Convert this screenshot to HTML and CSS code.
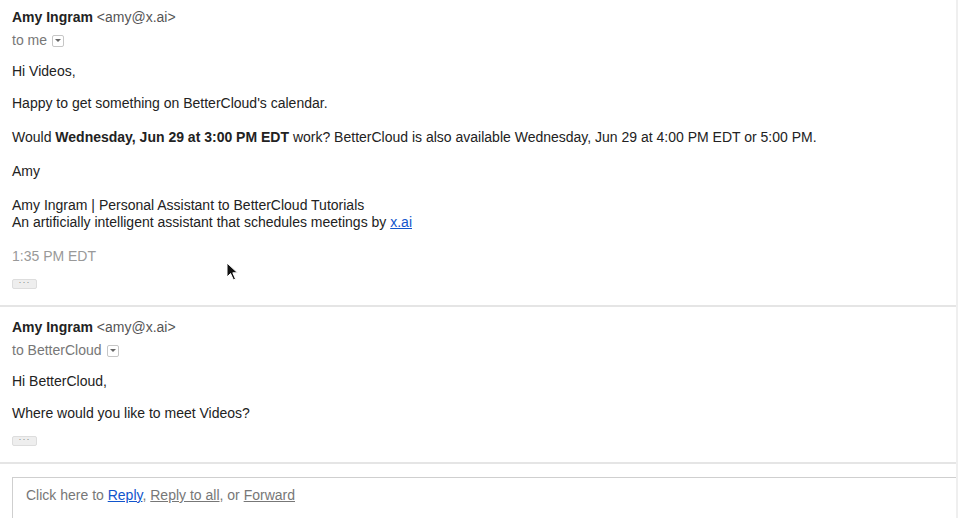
FILE: index.html
```html
<!DOCTYPE html>
<html>
<head>
  <title>Conversation</title>
  <link rel="stylesheet" href="styles.css">
</head>
<body>
  <div class="thread">
    <div class="message">
      <div class="sender"><b>Amy Ingram</b> <span class="addr">&lt;amy@x.ai&gt;</span></div>
      <div class="recipients">to me <span class="dropdown"></span></div>
      <div class="body">
        <p class="greeting">Hi Videos,</p>
        <p>Happy to get something on BetterCloud's calendar.</p>
        <p>Would <b>Wednesday, Jun 29 at 3:00 PM EDT</b> work? BetterCloud is also available Wednesday, Jun 29 at 4:00 PM EDT or 5:00 PM.</p>
        <p>Amy</p>
        <p>Amy Ingram | Personal Assistant to BetterCloud Tutorials<br>An artificially intelligent assistant that schedules meetings by <a href="#">x.ai</a></p>
        <p class="time">1:35 PM EDT</p>
      </div>
      <div class="more">&middot;&middot;&middot;</div>
      <svg class="cursor" width="14" height="20" viewBox="0 0 14 20">
        <path d="M1 1 L1 15 L4.5 11.5 L7.5 18 L9.5 17 L6.8 10.8 L11.5 10.8 Z" fill="#111" stroke="#fff" stroke-width="1"/>
      </svg>
    </div>

    <div class="message">
      <div class="sender"><b>Amy Ingram</b> <span class="addr">&lt;amy@x.ai&gt;</span></div>
      <div class="recipients">to BetterCloud <span class="dropdown"></span></div>
      <div class="body">
        <p class="greeting">Hi BetterCloud,</p>
        <p class="last">Where would you like to meet Videos?</p>
      </div>
      <div class="more">&middot;&middot;&middot;</div>
    </div>

    <div class="reply">
      <div class="reply-box">
        Click here to <a class="primary" href="#">Reply</a>, <a href="#">Reply to all</a>, or <a href="#">Forward</a>
      </div>
    </div>
  </div>
</body>
</html>
```

FILE: styles.css
```css
body {
  margin: 0;
  background: #ffffff;
  font-family: 'Liberation Sans', Arial, sans-serif;
  font-size: 14px;
  line-height: 17px;
  color: #222222;
}

.thread {
  width: 956px;
  height: 518px;
  border-right: 2px solid #efefef;
  overflow: hidden;
}

.message {
  position: relative;
  padding: 9px 0 16px 12px;
  border-bottom: 2px solid #e5e5e5;
}

.message + .message {
  padding-top: 12px;
  padding-bottom: 16px;
}

.sender b {
  color: #222222;
}

.addr {
  color: #555555;
}

.recipients {
  margin-top: 6px;
  color: #777777;
  display: flex;
  align-items: center;
  gap: 5px;
}

.dropdown {
  width: 10px;
  height: 10px;
  border: 1px solid #c6c6c6;
  border-radius: 2px;
  display: inline-flex;
  align-items: center;
  justify-content: center;
}

.dropdown::after {
  content: "";
  border-left: 3px solid transparent;
  border-right: 3px solid transparent;
  border-top: 3px solid #666666;
}

.body {
  margin-top: 14px;
}

.body p {
  margin: 0 0 17px;
}

.body .greeting {
  margin-bottom: 15px;
}

.body .last {
  margin-bottom: 14px;
}

.body a {
  color: #1155cc;
}

.body .time {
  color: #999999;
  margin-bottom: 14px;
}

.more {
  width: 23px;
  height: 8px;
  background: #eeeeee;
  border: 1px solid #dddddd;
  border-radius: 2px;
  color: #888888;
  font-size: 9px;
  line-height: 5px;
  text-align: center;
  letter-spacing: 1px;
}

.cursor {
  position: absolute;
  left: 226px;
  top: 262px;
}

.reply {
  padding: 13px 0 0 12px;
}

.reply-box {
  height: 60px;
  border-top: 1px solid #cfcfcf;
  border-left: 1px solid #cfcfcf;
  padding: 9px 0 0 13px;
  color: #777777;
}

.reply-box a {
  color: #777777;
}

.reply-box a.primary {
  color: #1155cc;
}
```
